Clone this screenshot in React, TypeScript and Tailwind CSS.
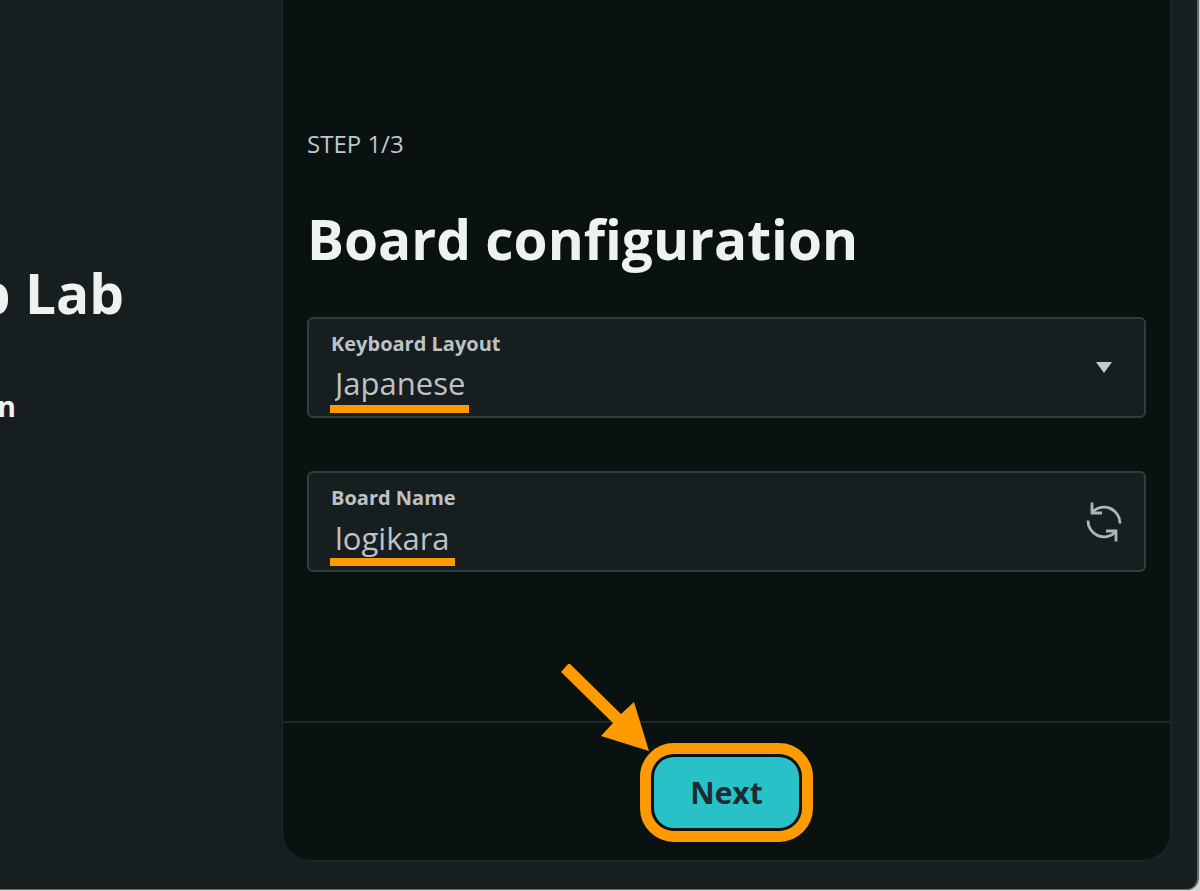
import { useState } from 'react';

const layouts = ['Japanese', 'English (US)', 'Italian'];

function RefreshIcon() {
  return (
    <svg width="36" height="40" viewBox="0 0 36 40" fill="none" stroke="#aeb5b6" strokeWidth="2.8" aria-hidden="true">
      <path d="M6 0.5V11H16" />
      <path d="M6.500 10A16 16 0 0 1 34 21.5" />
      <path d="M30 39.5V29H20" />
      <path d="M29.500 30A16 16 0 0 1 2 18.5" />
    </svg>
  );
}

function Arrow() {
  return (
    <svg
      className="pointer-events-none absolute right-full bottom-full"
      width="90"
      height="90"
      viewBox="0 0 90 90"
      fill="#ff9b00"
      aria-hidden="true"
    >
      <path d="M8 -1L60 50L73 38L88 87L40 72L52 59L0 8Z" />
    </svg>
  );
}

export default function App() {
  const [layout, setLayout] = useState(layouts[0]);
  const [boardName, setBoardName] = useState('logikara');

  return (
    <div className="min-h-screen bg-[#d5d7d5] pr-px pb-px font-['Open_Sans','Noto_Sans',sans-serif]">
      <div className="flex min-h-[calc(100vh-1px)] rounded-br-xl border-r-2 border-b border-[#626a6c] bg-[#171e20]">
        <aside className="flex w-[282px] shrink-0 flex-col overflow-hidden pt-[257px] text-[#f0f2f2]">
          <h1 className="flex w-[124px] justify-end text-[55px] leading-[72px] font-bold whitespace-nowrap">App Lab</h1>
          <p className="mt-[59px] flex w-4 justify-end text-[28px] leading-9 font-bold">n</p>
        </aside>

        <main className="mr-[26px] mb-7 flex min-w-0 flex-1 flex-col rounded-b-[28px] border-x border-b border-[#202729] bg-[#091111]">
          <form className="flex flex-1 flex-col" onSubmit={(e) => e.preventDefault()}>
            <div className="flex-1 px-6 pt-[126px] pb-8">
              <p className="text-2xl leading-9 text-[#c2c7c7]">STEP 1/3</p>
              <h2 className="mt-[41px] text-[55px] leading-[72px] font-bold text-[#eff2f2]">Board configuration</h2>

              <div className="relative mt-[42px] flex h-[101px] items-center rounded-md border-2 border-[#353c3e] bg-[#171e20] px-[22px]">
                <div className="min-w-0 flex-1 pt-1">
                  <label htmlFor="layout" className="block text-xl leading-6 font-bold text-[#bdc2c4]">
                    Keyboard Layout
                  </label>
                  <select
                    id="layout"
                    value={layout}
                    onChange={(e) => setLayout(e.target.value)}
                    className="block h-[52px] w-full appearance-none bg-transparent px-1 pt-1 text-[31px] text-[#bdc2c4] outline-none"
                  >
                    {layouts.map((name) => (
                      <option key={name}>{name}</option>
                    ))}
                  </select>
                </div>
                <svg className="mr-2.5" width="16" height="11" viewBox="0 0 16 11" fill="#c6cbcc" aria-hidden="true">
                  <path d="M0 0H16L8 11Z" />
                </svg>
                <span className="absolute bottom-[3px] left-[21px] h-2 w-[139px] bg-[#ff9b00]" />
              </div>

              <div className="relative mt-[53px] flex h-[101px] items-center rounded-md border-2 border-[#353c3e] bg-[#171e20] px-[22px]">
                <div className="min-w-0 flex-1 pt-1">
                  <label htmlFor="board-name" className="block text-xl leading-6 font-bold text-[#bdc2c4]">
                    Board Name
                  </label>
                  <input
                    id="board-name"
                    type="text"
                    value={boardName}
                    onChange={(e) => setBoardName(e.target.value)}
                    className="block h-[52px] w-full bg-transparent px-1 pt-1 text-[31px] text-[#bdc2c4] outline-none"
                  />
                </div>
                <button type="button" aria-label="Generate a new name" onClick={() => setBoardName('logikara')}>
                  <RefreshIcon />
                </button>
                <span className="absolute bottom-1 left-[21px] h-2 w-[125px] bg-[#ff9b00]" />
              </div>
            </div>

            <footer className="flex justify-center border-t-2 border-[#202729] pt-5 pb-[18px]">
              <div className="relative rounded-[34px] border-[11px] border-[#ff9b00] p-[3px]">
                <Arrow />
                <button
                  type="submit"
                  className="block h-[71px] w-[145px] rounded-[20px] bg-[#28c1c7] text-3xl font-bold text-[#1c2a31]"
                >
                  Next
                </button>
              </div>
            </footer>
          </form>
        </main>
      </div>
    </div>
  );
}
